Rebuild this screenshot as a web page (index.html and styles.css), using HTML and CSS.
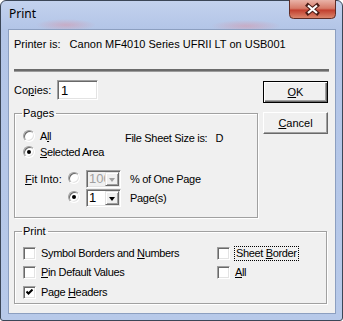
FILE: index.html
```html
<!DOCTYPE html>
<html>
<head>
<meta charset="utf-8">
<title>Print</title>
<link rel="stylesheet" href="styles.css">
</head>
<body>
<div class="window">
  <div class="titlebar">
    <div class="title">Print</div>
    <div class="close">
      <svg width="47" height="19" viewBox="0 0 47 19">
        <defs>
          <linearGradient id="cg" x1="0" y1="0" x2="0" y2="1">
            <stop offset="0" stop-color="#e9b3a8"/>
            <stop offset="0.45" stop-color="#d67a68"/>
            <stop offset="0.55" stop-color="#c2402f"/>
            <stop offset="1" stop-color="#dc8a70"/>
          </linearGradient>
        </defs>
        <path d="M0.5 0 V14.5 Q0.5 18.5 4.5 18.5 H42.5 Q46.5 18.5 46.5 14.5 V0" fill="url(#cg)" stroke="#5e2d27"/>
        <path d="M19 5.5 L28 13 M28 5.5 L19 13" stroke="#4a1c16" stroke-width="4.2" stroke-linecap="square"/>
        <path d="M19 5.5 L28 13 M28 5.5 L19 13" stroke="#fff" stroke-width="2.2"/>
      </svg>
    </div>
  </div>
  <div class="client">
    <div class="printer">Printer is:&nbsp;&nbsp; Canon MF4010 Series UFRII LT on USB001</div>
    <div class="rule"></div>
    <div class="main">
      <div class="left">
        <div class="copies">
          <span class="copies-label">Co<u>p</u>ies:</span>
          <div class="edit">1</div>
        </div>
        <fieldset class="group pages">
          <legend>Pages</legend>
          <div class="pages-top">
            <div class="radios">
              <div class="opt"><span class="radio"></span><span>A<u>l</u>l</span></div>
              <div class="opt"><span class="radio checked"></span><span><u>S</u>elected Area</span></div>
            </div>
            <div class="sheet">File Sheet Size is:&nbsp;&nbsp; D</div>
          </div>
          <div class="fit">
            <span class="fit-label"><u>F</u>it Into:</span>
            <span class="radio"></span>
            <div class="combo disabled"><span class="combo-text">100</span><span class="drop"><i></i></span></div>
            <span class="fit-text">% of One Page</span>
            <span></span>
            <span class="radio checked"></span>
            <div class="combo"><span class="combo-text">1</span><span class="drop"><i></i></span></div>
            <span class="fit-text">Page(s)</span>
          </div>
        </fieldset>
      </div>
      <div class="buttons">
        <div class="btn default"><span><u>O</u>K</span></div>
        <div class="btn"><span><u>C</u>ancel</span></div>
      </div>
    </div>
    <fieldset class="group print">
      <legend>Print</legend>
      <div class="print-grid">
        <div class="opt"><span class="check"></span><span>Symbol Borders and <u>N</u>umbers</span></div>
        <div class="opt"><span class="check"></span><span class="focus">Sheet <u>B</u>order</span></div>
        <div class="opt"><span class="check"></span><span><u>P</u>in Default Values</span></div>
        <div class="opt"><span class="check"></span><span><u>A</u>ll</span></div>
        <div class="opt"><span class="check"><svg width="7" height="7" viewBox="0 0 7 7"><path d="M0.5 2.5 L2.5 4.5 L6.5 0.5" fill="none" stroke="#000" stroke-width="2"/></svg></span><span>Page <u>H</u>eaders</span></div>
      </div>
    </fieldset>
  </div>
</div>
</body>
</html>
```

FILE: styles.css
```css
* { box-sizing: border-box; }
html, body { margin: 0; padding: 0; }
body {
  width: 343px;
  height: 321px;
  overflow: hidden;
  background: #ffffff;
  font-family: "Liberation Sans", Arial, sans-serif;
  font-size: 11px;
  line-height: 13px;
  color: #000;
}
u { text-decoration: underline; text-underline-offset: 1px; }

.window {
  width: 343px;
  height: 321px;
  border: 1px solid #3b4657;
  border-radius: 6px 6px 3px 3px;
  padding: 0 6px 6px 7px;
  display: flex;
  flex-direction: column;
  background:
    radial-gradient(ellipse 30px 6px at 65px 24px, rgba(214, 150, 170, 0.55), transparent),
    radial-gradient(ellipse 35px 6px at 245px 25px, rgba(214, 150, 170, 0.55), transparent),
    linear-gradient(#c3d2ee, #b3c5e7 28px, #b7c9e9);
}
.titlebar {
  height: 28px;
  display: flex;
  align-items: flex-start;
}
.title {
  font-family: "Noto Sans", "Open Sans", sans-serif;
  font-size: 12px;
  line-height: 16px;
  padding: 5px 0 0 1px;
  color: #000;
}
.close {
  margin-left: auto;
  margin-top: -1px;
  width: 47px;
  height: 19px;
}
.close svg { display: block; }

.client {
  height: 285px;
  border: 1px solid #8c9fc0;
  background: #f0f0f0;
  padding: 0 6px 0 5px;
}
.printer {
  padding-top: 8px;
  white-space: nowrap;
}
.rule {
  margin-top: 18px;
  height: 3px;
  border-top: 2px solid #6b6b6b;
  border-bottom: 1px solid #9c9c9c;
}
.main {
  margin-top: 8px;
  display: flex;
}
.left { width: 244px; }
.buttons {
  margin-left: 5px;
  width: 65px;
  display: flex;
  flex-direction: column;
}

.edit, .combo, .check {
  background: #fff;
  border-style: solid;
  border-width: 1px;
  border-color: #a0a0a0 #fff #fff #a0a0a0;
  box-shadow: inset 1px 1px 0 #696969, inset -1px -1px 0 #e3e3e3;
}

.copies {
  display: flex;
  align-items: center;
  height: 20px;
}
.copies-label { width: 43px; }
.edit {
  width: 41px;
  height: 20px;
  padding: 2px 0 0 3px;
  font-size: 13px;
  line-height: 15px;
}

.group {
  margin: 0;
  padding: 0;
  min-width: 0;
  border: 1px solid #a0a0a0;
  box-shadow: inset 1px 1px 0 #fff, 1px 1px 0 #fff;
}
.group legend {
  margin-left: 7px;
  padding: 0 2px 0 1px;
  line-height: 13px;
}
.pages {
  margin-top: 7px;
  height: 111px;
}
.pages-top { display: flex; margin-top: 8px; }
.radios { width: 102px; margin-left: 8px; }
.opt {
  display: flex;
  align-items: center;
  height: 16px;
  white-space: nowrap;
  letter-spacing: -0.35px;
}
.radio {
  flex: none;
  width: 12px;
  height: 12px;
  border-radius: 50%;
  border-style: solid;
  border-width: 1px;
  border-color: #a0a0a0 #fff #fff #a0a0a0;
  box-shadow: inset 1px 1px 0 #696969, inset -1px -1px 0 #e3e3e3;
  background: #fff;
  display: flex;
  align-items: center;
  justify-content: center;
}
.radio.checked::after {
  content: "";
  width: 4px;
  height: 4px;
  border-radius: 50%;
  background: #000;
}
.radios .radio { margin-right: 5px; }
.sheet { margin-top: 4px; white-space: nowrap; letter-spacing: -0.3px; }

.fit {
  margin: 10px 0 0 10px;
  display: grid;
  grid-template-columns: 43px 18px 35px auto;
  grid-template-rows: 18px 18px;
  row-gap: 1px;
  align-items: center;
  white-space: nowrap;
}
.fit .radio { margin-top: -2px; }
.fit-text { margin-left: 9px; letter-spacing: -0.3px; }
.combo {
  width: 35px;
  height: 18px;
  display: flex;
  overflow: hidden;
}
.combo-text {
  flex: 1;
  overflow: hidden;
  padding: 1px 0 0 2px;
  font-size: 13px;
  line-height: 14px;
}
.combo.disabled { background: #f0f0f0; }
.combo.disabled .combo-text { color: #a0a0a0; }
.drop {
  flex: none;
  width: 14px;
  height: 14px;
  margin: 1px 1px 0 0;
  background: #f0f0f0;
  border-style: solid;
  border-width: 1px;
  border-color: #e3e3e3 #696969 #696969 #e3e3e3;
  box-shadow: inset 1px 1px 0 #fff, inset -1px -1px 0 #a0a0a0;
  display: flex;
  align-items: center;
  justify-content: center;
}
.drop i {
  width: 0;
  height: 0;
  border-left: 3.5px solid transparent;
  border-right: 3.5px solid transparent;
  border-top: 4px solid #000;
  margin-top: 1px;
}
.combo.disabled .drop i { border-top-color: #a0a0a0; }

.btn {
  height: 22px;
  display: flex;
  align-items: center;
  justify-content: center;
  background: #f0f0f0;
  border-style: solid;
  border-width: 1px;
  border-color: #fff #696969 #696969 #fff;
  box-shadow: inset -1px -1px 0 #a0a0a0;
}
.btn.default {
  margin-top: 1px;
  border-color: #000;
  box-shadow: inset 1px 1px 0 #fff, inset -1px -1px 0 #696969, inset -2px -2px 0 #a0a0a0;
}
.btn + .btn { margin-top: 9px; }

.print {
  margin-top: 7px;
  width: 313px;
  height: 79px;
}
.print-grid {
  margin: 9px 0 0 8px;
  display: grid;
  grid-template-columns: 194px auto;
  grid-template-rows: 19px 20px 13px;
  align-items: start;
}
.print-grid .opt { height: 13px; }
.check {
  flex: none;
  width: 13px;
  height: 13px;
  margin-right: 5px;
  display: flex;
  align-items: center;
  justify-content: center;
}
.check svg { display: block; }
.focus { outline: 1px dotted #000; outline-offset: 0; padding: 0 1px; }
```
